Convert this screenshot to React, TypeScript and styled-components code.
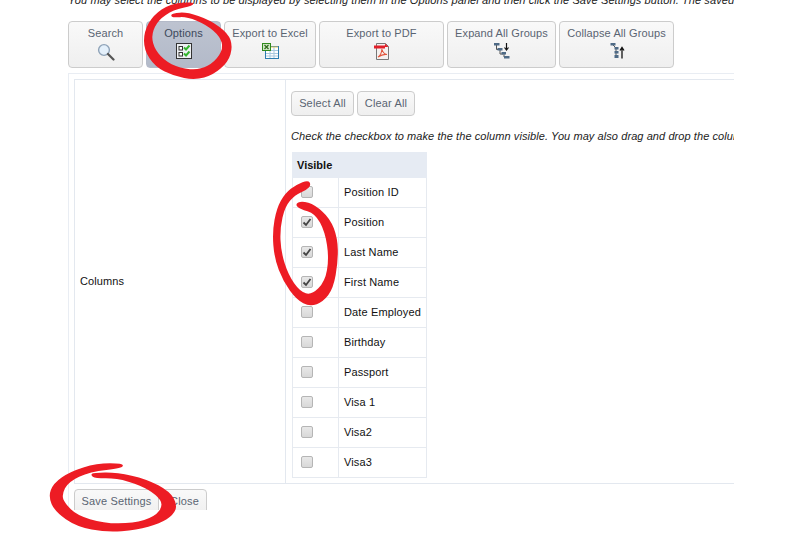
import styled, { createGlobalStyle } from 'styled-components'

const GlobalStyle = createGlobalStyle`
  html, body {
    margin: 0;
    padding: 0;
    background: #fff;
    font-family: "Liberation Sans", Arial, sans-serif;
  }
`

const Page = styled.div`
  position: relative;
  width: 788px;
  height: 538px;
  overflow: hidden;
`

const Content = styled.div`
  width: 666px;
  height: 510px;
  margin-left: 68px;
  overflow: hidden;
`

const Intro = styled.p`
  margin: -8px 0 0;
  height: 29px;
  font-size: 11px;
  letter-spacing: 0.09px;
  line-height: 16px;
  font-style: italic;
  color: #222;
  white-space: nowrap;
`

const Toolbar = styled.div`
  display: flex;
  gap: 3px;
`

const ToolButton = styled.div<{ $width: number; $active?: boolean }>`
  box-sizing: border-box;
  width: ${({ $width }) => $width}px;
  height: 47px;
  padding-top: 4px;
  display: flex;
  flex-direction: column;
  align-items: center;
  gap: 3px;
  border: 1px solid ${({ $active }) => ($active ? '#b4bac8' : '#ccc')};
  border-radius: 4px;
  background: ${({ $active }) =>
    $active
      ? 'linear-gradient(#bdc3d0, #b3bac9)'
      : 'linear-gradient(#f9f9f9, #efefef)'};
  color: ${({ $active }) => ($active ? '#3d4a5c' : '#5a6472')};
  font-size: 11px;
  letter-spacing: 0.1px;
  line-height: 14px;
  white-space: nowrap;
`

const Panel = styled.div`
  box-sizing: border-box;
  width: 666px;
  height: 437px;
  margin-top: 5px;
  padding: 5px 0 0 5px;
  border-top: 1px solid #e9edf3;
  border-left: 1px solid #e9edf3;
`

const FormRow = styled.div`
  display: grid;
  grid-template-columns: 211px 1fr;
  height: 403px;
  border: 1px solid #e3e8ef;
  border-right: none;
`

const Label = styled.div`
  display: flex;
  align-items: center;
  padding: 0 0 2px 5px;
  border-right: 1px solid #e3e8ef;
  font-size: 11px;
  letter-spacing: 0.1px;
  color: #111;
`

const Options = styled.div`
  padding: 11px 0 0 5px;
  overflow: hidden;
`

const SmallButtons = styled.div`
  display: flex;
  gap: 3px;
`

const SmallButton = styled.div<{ $width: number }>`
  box-sizing: border-box;
  width: ${({ $width }) => $width}px;
  height: 25px;
  padding-bottom: 2px;
  display: flex;
  align-items: center;
  justify-content: center;
  border: 1px solid #ccc;
  border-radius: 4px;
  background: linear-gradient(#f9f9f9, #efefef);
  color: #5a6472;
  font-size: 11px;
  letter-spacing: 0.15px;
  white-space: nowrap;
`

const Hint = styled.p`
  margin: 13px 0 9px;
  font-size: 11px;
  letter-spacing: 0.08px;
  line-height: 14px;
  font-style: italic;
  color: #222;
  white-space: nowrap;
`

const ColumnTable = styled.div`
  width: 135px;
  margin-left: 1px;
`

const HeaderRow = styled.div`
  box-sizing: border-box;
  height: 26px;
  display: flex;
  align-items: center;
  padding-left: 5px;
  background: #e6ebf3;
  font-size: 11px;
  font-weight: bold;
  color: #111;
`

const Row = styled.div`
  box-sizing: border-box;
  height: 30px;
  display: grid;
  grid-template-columns: 46px 1fr;
  border: 1px solid #e6eaf0;
  border-top: none;
`

const CheckCell = styled.div`
  display: flex;
  align-items: center;
  padding: 0 0 1px 8px;
  border-right: 1px solid #e6eaf0;
`

const NameCell = styled.div`
  display: flex;
  align-items: center;
  padding: 0 0 2px 5px;
  font-size: 11px;
  letter-spacing: 0.14px;
  color: #111;
  white-space: nowrap;
`

const CheckBox = styled.span`
  box-sizing: border-box;
  width: 12px;
  height: 12px;
  display: flex;
  border: 1px solid #b5b5b5;
  border-radius: 2px;
  background: linear-gradient(#e8e8e8, #d8d8d8);
`

const Footer = styled.div`
  display: flex;
  gap: 3px;
  padding-top: 5px;
`

const FooterButton = styled.div<{ $width: number }>`
  box-sizing: border-box;
  width: ${({ $width }) => $width}px;
  height: 26px;
  padding-top: 4px;
  text-align: center;
  border: 1px solid #ccc;
  border-radius: 4px;
  background: linear-gradient(#f9f9f9, #efefef);
  color: #5a6472;
  font-size: 11px;
  letter-spacing: 0.15px;
  line-height: 14px;
`

const Annotations = styled.svg`
  position: absolute;
  inset: 0;
  pointer-events: none;
`

const SearchIcon = () => (
  <svg width="18" height="18" viewBox="0 0 18 18">
    <circle cx="7" cy="7" r="5.4" fill="#e4f0fb" stroke="#8fa3b8" strokeWidth="1.4" />
    <path d="M11 11l5.5 5.5" stroke="#555" strokeWidth="2.2" strokeLinecap="round" />
  </svg>
)

const OptionsIcon = () => (
  <svg width="16" height="16" viewBox="0 0 16 16">
    <rect x=".5" y=".5" width="15" height="15" fill="#eef0f3" stroke="#333" />
    <rect x="3" y="3.5" width="3.5" height="3.5" fill="#fff" stroke="#333" />
    <rect x="3" y="9.5" width="3.5" height="3.5" fill="#fff" stroke="#333" />
    <path d="M8 4.5l2 2 3.5-4M8 10.5l2 2 3.5-4" fill="none" stroke="#35b52f" strokeWidth="2" />
  </svg>
)

const ExcelIcon = () => (
  <svg width="17" height="16" viewBox="0 0 17 16">
    <rect x="3.5" y="3.5" width="13" height="12" fill="#fff" stroke="#2d7db0" />
    <path d="M4 7.5h12M4 10.5h12M4 13h12M8 4v11M12 4v11" stroke="#a9c9df" />
    <path d="M9 4h7" stroke="#e8c75a" />
    <rect x=".5" y=".5" width="8" height="7" fill="#cfe8c4" stroke="#2f8a1c" />
    <path d="M2.5 2l4 4M6.5 2l-4 4" stroke="#2f6a1c" strokeWidth="1.2" />
  </svg>
)

const PdfIcon = () => (
  <svg width="16" height="17" viewBox="0 0 16 17">
    <path d="M2.5.5h9l3 3v13h-12z" fill="#f5f1ef" stroke="#777" />
    <rect x="0" y="2.5" width="11" height="3" fill="#e2202a" />
    <path d="M11 .5l3.5 3.5h-3.500z" fill="#e2202a" />
    <path d="M4 14c2-1 3.500-4 4-8 .5 3 2 5 5 5.500-3-.5-6 .5-9 2.500z" fill="none" stroke="#e2533a" strokeWidth="1.100" />
  </svg>
)

const ExpandIcon = () => (
  <svg width="16" height="16" viewBox="0 0 16 16">
    <path d="M2.500 2v4.500h2M6 7v4h3M10 11v3h1" fill="none" stroke="#555" />
    <rect x="0" y="0" width="5.500" height="2.500" fill="#4e6a86" />
    <rect x="3.500" y="5" width="5" height="2.500" fill="#4e6a86" />
    <rect x="7.500" y="9" width="4.500" height="2.500" fill="#4e6a86" />
    <rect x="10" y="13" width="5.500" height="2.500" fill="#4e6a86" />
    <path d="M12.500 0v6.500M10.500 4.500l2 2.500 2-2.500" fill="none" stroke="#111" strokeWidth="1.200" />
  </svg>
)

const CollapseIcon = () => (
  <svg width="16" height="16" viewBox="0 0 16 16">
    <path d="M4 2l3 3v10" fill="none" stroke="#555" />
    <rect x="1.500" y="0" width="5" height="2.500" fill="#4e6a86" />
    <rect x="5.500" y="4" width="4" height="2.500" fill="#4e6a86" />
    <rect x="5.500" y="8" width="4" height="2.500" fill="#4e6a86" />
    <rect x="5.500" y="12" width="4" height="3" fill="#4e6a86" />
    <path d="M13 15.500V5M11 7.500l2-3 2 3" fill="none" stroke="#111" strokeWidth="1.300" />
  </svg>
)

const CheckMark = () => (
  <svg width="10" height="10" viewBox="0 0 10 10">
    <path d="M1.500 5.500l2.500 2.500 4.500-6" fill="none" stroke="#444" strokeWidth="1.800" />
  </svg>
)

const columns = [
  { name: 'Position ID', checked: false },
  { name: 'Position', checked: true },
  { name: 'Last Name', checked: true },
  { name: 'First Name', checked: true },
  { name: 'Date Employed', checked: false },
  { name: 'Birthday', checked: false },
  { name: 'Passport', checked: false },
  { name: 'Visa 1', checked: false },
  { name: 'Visa2', checked: false },
  { name: 'Visa3', checked: false },
]

// marker strokes, traced as closed outlines at 3x around each origin
const optionsRing = [[190,5],[120,12],[70,45],[42,95],[42,150],[75,200],[130,228],[195,240],[250,225],[295,185],[308,140],[295,100],[240,60],[170,36],[128,40],[122,47],[130,53],[170,50],[230,75],[270,110],[280,145],[255,185],[210,210],[150,205],[100,180],[70,140],[65,100],[85,60],[130,30],[190,17]]
const visibleRing = [[130,15],[95,28],[60,55],[35,100],[22,170],[28,250],[55,320],[95,375],[135,395],[175,380],[205,340],[219,260],[218,190],[195,130],[150,90],[110,77],[90,88],[105,102],[150,115],[180,170],[192,250],[180,320],[140,360],[105,350],[70,300],[48,230],[45,160],[60,95],[90,60],[125,45],[138,30]]
const saveRing = [[250,25],[170,25],[90,50],[40,85],[25,125],[45,170],[110,215],[200,232],[290,225],[360,205],[400,180],[412,150],[390,110],[320,72],[230,52],[160,53],[152,60],[165,70],[230,70],[300,90],[350,120],[370,150],[345,185],[280,205],[190,205],[110,180],[75,145],[65,120],[85,80],[150,50],[248,40]]

const smoothOutline = (points: number[][]) => {
  const mid = (a: number[], b: number[]) => `${(a[0] + b[0]) / 2} ${(a[1] + b[1]) / 2}`
  const last = points[points.length - 1]
  let d = `M${mid(last, points[0])}`
  points.forEach((point, i) => {
    d += `Q${point[0]} ${point[1]} ${mid(point, points[(i + 1) % points.length])}`
  })
  return d + 'Z'
}

const App = () => (
  <Page>
    <GlobalStyle />
    <Content>
      <Intro>
        You may select the columns to be displayed by selecting them in the Options panel and
        then click the Save Settings button. The saved settings
      </Intro>
      <Toolbar>
        <ToolButton $width={75}>Search<SearchIcon /></ToolButton>
        <ToolButton $width={75} $active>Options<OptionsIcon /></ToolButton>
        <ToolButton $width={92}>Export to Excel<ExcelIcon /></ToolButton>
        <ToolButton $width={125}>Export to PDF<PdfIcon /></ToolButton>
        <ToolButton $width={109}>Expand All Groups<ExpandIcon /></ToolButton>
        <ToolButton $width={115}>Collapse All Groups<CollapseIcon /></ToolButton>
      </Toolbar>
      <Panel>
        <FormRow>
          <Label>Columns</Label>
          <Options>
            <SmallButtons>
              <SmallButton $width={63}>Select All</SmallButton>
              <SmallButton $width={58}>Clear All</SmallButton>
            </SmallButtons>
            <Hint>
              Check the checkbox to make the the column visible. You may also drag and drop the
              columns to change the order
            </Hint>
            <ColumnTable>
              <HeaderRow>Visible</HeaderRow>
              {columns.map((column) => (
                <Row key={column.name}>
                  <CheckCell>
                    <CheckBox>{column.checked && <CheckMark />}</CheckBox>
                  </CheckCell>
                  <NameCell>{column.name}</NameCell>
                </Row>
              ))}
            </ColumnTable>
          </Options>
        </FormRow>
        <Footer>
          <FooterButton $width={85}>Save Settings</FooterButton>
          <FooterButton $width={45}>Close</FooterButton>
        </Footer>
      </Panel>
    </Content>
    <Annotations width="788" height="538" viewBox="0 0 788 538">
      <g fill="#ed1c24">
        <path transform="translate(130 0) scale(0.3333)" d={smoothOutline(optionsRing)} />
        <path transform="translate(265 175) scale(0.3333)" d={smoothOutline(visibleRing)} />
        <path transform="translate(40 455) scale(0.3333)" d={smoothOutline(saveRing)} />
      </g>
    </Annotations>
  </Page>
)

export default App
